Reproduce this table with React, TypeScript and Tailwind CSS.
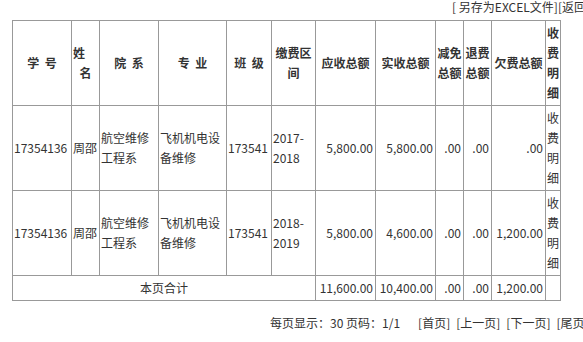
const rows = [
  {
    xh: '17354136',
    xm: '周邵',
    yx: '航空维修工程系',
    zy: '飞机机电设备维修',
    bj: '173541',
    qj: '2017-2018',
    ys: '5,800.00',
    ss: '5,800.00',
    jm: '.00',
    tf: '.00',
    qf: '.00',
  },
  {
    xh: '17354136',
    xm: '周邵',
    yx: '航空维修工程系',
    zy: '飞机机电设备维修',
    bj: '173541',
    qj: '2018-2019',
    ys: '5,800.00',
    ss: '4,600.00',
    jm: '.00',
    tf: '.00',
    qf: '1,200.00',
  },
];

const colWidths = [59, 28, 59, 68, 45, 44, 60, 60, 28, 28, 54, 15];

export default function App() {
  return (
    <div
      className="h-[342px] w-[583px] overflow-hidden bg-white text-[12px] text-[#333]"
      style={{ fontFamily: '"Noto Sans CJK SC", "Noto Sans", sans-serif' }}
    >
      <div className="w-[590px]">
        {/* toolbar */}
        <div className="h-[20px] text-right leading-[14px]">
          <span>[ 另存为EXCEL文件]</span>
          <span>[返回]</span>
        </div>

        <table className="ml-[12px] w-[549px] table-fixed border-collapse border border-[#999]">
          <colgroup>
            {colWidths.map((w, i) => (
              <col key={i} style={{ width: w }} />
            ))}
          </colgroup>
          <thead>
            <tr className="h-[85px] font-bold leading-[20px]">
              <th className="border border-[#999] p-0 text-center">学{'\u00a0\u00a0'}号</th>
              <th className="border border-[#999] p-0">
                <div className="pl-px text-left">姓</div>
                <div className="text-center">名</div>
              </th>
              <th className="border border-[#999] p-0 text-center">院{'\u00a0\u00a0'}系</th>
              <th className="border border-[#999] p-0 text-center">专{'\u00a0\u00a0'}业</th>
              <th className="border border-[#999] p-0 text-center">班{'\u00a0\u00a0'}级</th>
              <th className="border border-[#999] p-0 text-center">缴费区间</th>
              <th className="border border-[#999] p-0 text-center">应收总额</th>
              <th className="border border-[#999] p-0 text-center">实收总额</th>
              <th className="border border-[#999] p-0 text-center">减免总额</th>
              <th className="border border-[#999] p-0 text-center">退费总额</th>
              <th className="border border-[#999] p-0 text-center">欠费总额</th>
              <th className="border border-[#999] p-0 text-center">收费明细</th>
            </tr>
          </thead>
          <tbody>
            {rows.map((r, i) => (
              <tr key={i} className="h-[85px] leading-[20px]">
                <td className="border border-[#999] p-0 pl-px">{r.xh}</td>
                <td className="border border-[#999] p-0 pl-px">{r.xm}</td>
                <td className="border border-[#999] p-0 pl-px">{r.yx}</td>
                <td className="border border-[#999] p-0 pl-px">{r.zy}</td>
                <td className="border border-[#999] p-0 pl-px">{r.bj}</td>
                <td className="border border-[#999] p-0 pl-px">{r.qj}</td>
                <td className="border border-[#999] p-0 pr-[2px] text-right">{r.ys}</td>
                <td className="border border-[#999] p-0 pr-[2px] text-right">{r.ss}</td>
                <td className="border border-[#999] p-0 pr-[2px] text-right">{r.jm}</td>
                <td className="border border-[#999] p-0 pr-[2px] text-right">{r.tf}</td>
                <td className="border border-[#999] p-0 pr-[2px] text-right">{r.qf}</td>
                <td className="border border-[#999] p-0 pl-px">收费明细</td>
              </tr>
            ))}
            <tr className="h-[25px]">
              <td colSpan={6} className="border border-[#999] p-0 text-center">
                本页合计
              </td>
              <td className="border border-[#999] p-0 pr-[2px] text-right">11,600.00</td>
              <td className="border border-[#999] p-0 pr-[2px] text-right">10,400.00</td>
              <td className="border border-[#999] p-0 pr-[2px] text-right">.00</td>
              <td className="border border-[#999] p-0 pr-[2px] text-right">.00</td>
              <td className="border border-[#999] p-0 pr-[2px] text-right">1,200.00</td>
              <td className="border border-[#999] p-0"></td>
            </tr>
          </tbody>
        </table>

        {/* pagination */}
        <div className="mt-[12px] flex items-center leading-[20px]">
          <div className="ml-[270px] whitespace-nowrap">
            每页显示：<span>30</span> 页码：<span>1/1</span>
          </div>
          <div className="ml-[18px] flex gap-[6px] whitespace-nowrap">
            <span>[首页]</span>
            <span>[上一页]</span>
            <span>[下一页]</span>
            <span>[尾页]</span>
          </div>
        </div>
      </div>
    </div>
  );
}
